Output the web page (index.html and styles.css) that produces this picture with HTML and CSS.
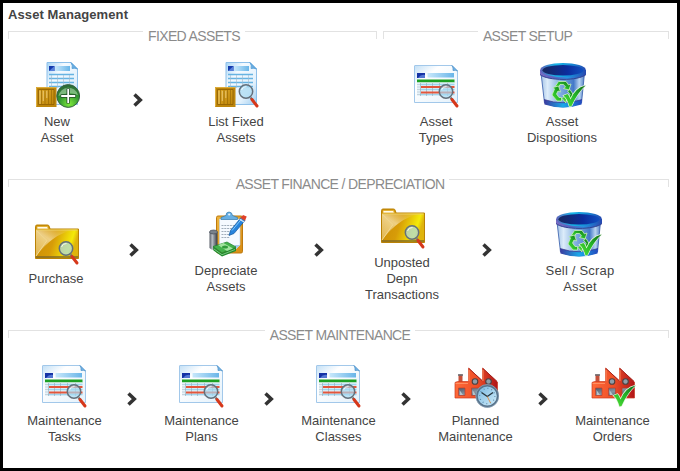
FILE: index.html
```html
<!DOCTYPE html>
<html lang="en">
<head>
<meta charset="utf-8">
<title>Asset Management</title>
<link rel="stylesheet" href="styles.css">
</head>
<body>
<svg class="sprite" aria-hidden="true">
  <defs>
    <linearGradient id="paper" x1="0" y1="0" x2="1" y2="1"><stop offset="0" stop-color="#a6d4f5"/><stop offset=".3" stop-color="#f4faff"/><stop offset=".7" stop-color="#e3f1fc"/><stop offset="1" stop-color="#9dcdf0"/></linearGradient>
    <linearGradient id="sheet" x1="0" y1="0" x2="1" y2="1"><stop offset="0" stop-color="#c3e0f6"/><stop offset=".3" stop-color="#fff"/><stop offset="1" stop-color="#e3f1fb"/></linearGradient>
    <linearGradient id="sky"><stop offset="0" stop-color="#c8e8fb"/><stop offset="1" stop-color="#69b5e8"/></linearGradient>
    <linearGradient id="crate" x1="0" y1="0" x2="1" y2="1"><stop offset="0" stop-color="#dfa92a"/><stop offset="1" stop-color="#bd8508"/></linearGradient>
    <linearGradient id="folder" x1="0" y1="0" x2="1" y2=".25"><stop offset="0" stop-color="#ca8a04"/><stop offset=".5" stop-color="#d79c08"/><stop offset=".74" stop-color="#e9cb08"/><stop offset=".9" stop-color="#f4ea08"/><stop offset="1" stop-color="#dfb40c"/></linearGradient>
    <linearGradient id="shine" x1="0" y1="1" x2="1" y2="0"><stop offset="0" stop-color="#f3dca0" stop-opacity=".25"/><stop offset=".5" stop-color="#fff5d8" stop-opacity=".6"/><stop offset="1" stop-color="#e5b43a" stop-opacity=".1"/></linearGradient>
    <radialGradient id="orb" cx=".55" cy=".85" r=".8"><stop offset="0" stop-color="#7eea3b"/><stop offset=".55" stop-color="#349b30"/><stop offset="1" stop-color="#2c6c38"/></radialGradient>
    <linearGradient id="rim"><stop offset="0" stop-color="#5f62b8"/><stop offset=".35" stop-color="#16b5e8"/><stop offset=".7" stop-color="#1787d3"/><stop offset="1" stop-color="#2648b0"/></linearGradient>
    <linearGradient id="band"><stop offset="0" stop-color="#7a6cc4"/><stop offset=".3" stop-color="#5a62c0"/><stop offset=".6" stop-color="#2a8fe0"/><stop offset="1" stop-color="#2648b0"/></linearGradient>
    <linearGradient id="hollow"><stop offset="0" stop-color="#17285f"/><stop offset=".6" stop-color="#0c2c9c"/><stop offset="1" stop-color="#104fc0"/></linearGradient>
    <linearGradient id="bucket"><stop offset="0" stop-color="#a5c3e5"/><stop offset=".15" stop-color="#dcecfa"/><stop offset=".45" stop-color="#7fabdf"/><stop offset=".75" stop-color="#4479c8"/><stop offset=".88" stop-color="#b9d4f1"/><stop offset="1" stop-color="#5280c5"/></linearGradient>
    <linearGradient id="base"><stop offset="0" stop-color="#3c399d"/><stop offset=".5" stop-color="#19a9e9"/><stop offset="1" stop-color="#2448bd"/></linearGradient>
    <linearGradient id="leaf" x1="1" y1="0" x2="0" y2="1"><stop offset="0" stop-color="#11691b"/><stop offset=".5" stop-color="#25b829"/><stop offset="1" stop-color="#53df35"/></linearGradient>
    <linearGradient id="brick"><stop offset="0" stop-color="#ff6a38"/><stop offset=".5" stop-color="#ee5028"/><stop offset="1" stop-color="#b01418"/></linearGradient>
    <linearGradient id="pane" x1="0" y1="0" x2="1" y2="1"><stop offset="0" stop-color="#4d5868"/><stop offset=".5" stop-color="#8794a2"/><stop offset="1" stop-color="#48505c"/></linearGradient>
    <linearGradient id="face" x1="0" y1="0" x2="1" y2="1"><stop offset="0" stop-color="#75b6df"/><stop offset="1" stop-color="#d5effb"/></linearGradient>
    <linearGradient id="can"><stop offset="0" stop-color="#555c66"/><stop offset=".35" stop-color="#b8bec5"/><stop offset="1" stop-color="#2f353e"/></linearGradient>
    <linearGradient id="board" x1="0" y1="0" x2="1" y2="1"><stop offset="0" stop-color="#eeb43c"/><stop offset="1" stop-color="#d98c12"/></linearGradient>
  </defs>

  <symbol id="lens" viewBox="0 0 48 52">
    <path d="M38.500 36.500 40.500 39" stroke="#777" stroke-width="2.200"/>
    <path d="M40 38.500 45 45" stroke="#d6381b" stroke-width="3" stroke-linecap="round"/>
    <circle cx="34" cy="30.500" r="6.700" fill="#a8daf2" fill-opacity=".68" stroke="#64707b" stroke-width="1.500"/>
    <path d="M29.500 29a5 5 0 0 1 5-3.500" fill="none" stroke="#fff" stroke-opacity=".8"/>
  </symbol>

  <symbol id="tick" viewBox="0 0 48 52">
    <path d="M25.500 34.500 29.500 33Q31.500 35 32.500 38.500 37 27 47.500 24.500 39.500 31.500 33.500 45L31.500 45.500Q29.500 38 25.500 34.500Z" fill="url(#leaf)" stroke="#e6f6df" stroke-width="1.300" paint-order="stroke"/>
  </symbol>

  <symbol id="ledger" viewBox="0 0 48 52">
    <path d="M14 1.500H38L44.500 8V43.500H14Z" fill="url(#paper)" stroke="#8dbfe9"/>
    <path d="M38 1.500Q40 5 39 7.500 42 6.800 44.500 8Z" fill="#68aee2" stroke="#4b96d2" stroke-width=".7"/>
    <path d="M22 5H37V10H22Z" fill="url(#sky)"/>
    <path d="M16 5H21.500V10H16Z" fill="#1439ad"/><path d="M16 10 21.500 5V10Z" fill="#5680da"/>
    <path d="M16 13.500H41M16 17.500H41M16 21.500H41M16 25.500H41" stroke="#65b3e2" stroke-width="1.600"/>
    <path d="M18.500 14V27M24.500 14V27M30.500 14V27M36.500 14V27" stroke="#a2bacd" stroke-width=".6"/>
    <path d="M3 26H23.500V46H3Z" fill="#bd860c"/>
    <path d="M5.500 28.500H21V43.500H5.500Z" fill="url(#crate)" stroke="#8e5e00" stroke-width=".8"/>
    <path d="M3.500 45.500V26.500H23" fill="none" stroke="#e4b74b" stroke-width=".8"/>
    <path d="M8.500 29V43M12 29V43M15.500 29V43M18.500 29V43" stroke="#9a6a04" stroke-width=".7"/>
    <path d="M7 43V30M10.300 40V30M13.800 37V30" stroke="#efd083" stroke-width=".8"/>
  </symbol>

  <symbol id="new-asset" viewBox="0 0 48 52">
    <use href="#ledger"/>
    <circle cx="35.200" cy="35" r="11.400" fill="url(#orb)" stroke="#376342" stroke-width="1"/>
    <path d="M25.500 35a10 10 0 0 1 19.500-1Q35 30 25.500 35Z" fill="#d6f2d6" opacity=".45"/>
    <path d="M35.200 27.500V42.500M27.700 35H42.700" stroke="#244a2a" stroke-width="3.400"/>
    <path d="M35.200 28V42M28.200 35H42.200" stroke="#fff" stroke-width="1.800"/>
  </symbol>

  <symbol id="list-asset" viewBox="0 0 48 52"><use href="#ledger"/><use href="#lens"/></symbol>

  <symbol id="table" viewBox="0 0 48 52">
    <path d="M2.500 5Q2.500 4.500 3 4.500H40L45.500 10V41.500H2.500Z" fill="url(#sheet)" stroke="#a2c8ea"/>
    <path d="M40 4.500Q41.500 7 41 9.500 44 9 45.500 10Z" fill="#72b3e5" stroke="#4c90c8" stroke-width=".7"/>
    <path d="M15.500 12H42V16.500H15.500Z" fill="url(#sky)"/>
    <path d="M5 12H13V17H5Z" fill="#1532a5"/><path d="M6 17Q9 13 13 14V17Z" fill="#5377d2"/>
    <path d="M5 18.500H42.500V21.500H5Z" fill="#1ca024"/>
    <path d="M5 21.500H42.500V35H5Z" fill="#e5f2fa"/>
    <path d="M8 23.500H42.500M8 28.500H42.500M8 33.500H42.500" stroke="#9fd5ee" stroke-width="1.700"/>
    <path d="M8.500 22V35M14.500 22V35M20.500 22V35M27.500 22V35M35.500 22V35" stroke="#9ab1bf" stroke-width=".7"/>
    <path d="M9 26H42.500M9 31.500H42.500" stroke="#e3563c" stroke-width="2"/>
    <path d="M5 23.500H8M5 26H8M5 28.500H8M5 31H8M5 33.500H8" stroke="#b9c7ce" stroke-width=".7"/>
    <use href="#lens"/>
  </symbol>

  <symbol id="bin" viewBox="0 0 48 52">
    <path d="M2 12H45.500L42.500 42Q24 50 5.500 42Z" fill="url(#bucket)" stroke="#3159aa" stroke-width=".8"/>
    <path d="M5 38.500Q24 45 43 38.500L42.500 43.500Q24 49.500 5.500 43.500Z" fill="url(#base)"/>
    <path d="M5 38.500Q24 45 43 38.500" fill="none" stroke="#302d8b" stroke-width=".7"/>
    <path d="M1 9V13.500C8 20 40 20 47 13.500V9Z" fill="url(#band)"/>
    <path d="M1 13.500C8 20 40 20 47 13.500" fill="none" stroke="#354191"/>
    <ellipse cx="24" cy="9" rx="22.800" ry="7" fill="url(#rim)"/>
    <ellipse cx="24" cy="9.300" rx="20.500" ry="5.200" fill="url(#hollow)"/>
    <g fill="url(#leaf)" stroke="#c7f2b6" stroke-width=".8">
      <path d="M16.500 25 19.500 20.500H27L29.500 24 32 23 30 29 24.500 27.500 26.500 26 24.500 23.500H21L19.500 26.500Z"/>
      <path d="M14 26.500 19.500 25 21.500 31 19 30 17.500 33 20 36.500H22.500V40H18L13 34 15.500 28Z"/>
      <path d="M31 28.500 34.500 34 30 39.500H27V42L23 37.500 27 33.500V36L29 36 31 33.500 28.500 30Z"/>
    </g>
    <use href="#tick" x="-1"/>
  </symbol>

  <symbol id="folder-icon" viewBox="0 0 48 52">
    <path d="M3.500 12V8.500Q3.500 7 5 7H15.500Q17 7 17.300 8.500L18 11H46.500V40.500H3.500Z" fill="url(#folder)" stroke="#ba8205"/>
    <path d="M5 8.500H15.500L16.300 11H5Z" fill="#fffbe9" stroke="#e2ac28" stroke-width=".8"/>
    <path d="M4 12H41Q21 16 4 38Z" fill="url(#shine)"/>
    <path d="M4 12 15 22.500 4 38" fill="#f3d991" fill-opacity=".35" stroke="#f1d891" stroke-width="1"/>
    <path d="M4 12H45.500" stroke="#eed268"/>
    <path d="M4 39H46" stroke="#826a24" stroke-width="1.500"/>
    <use href="#lens"/>
  </symbol>

  <symbol id="clipboard" viewBox="0 0 48 52">
    <rect x="14.500" y="6" width="26" height="37" rx="1.500" fill="url(#board)" stroke="#bd7a10"/>
    <path d="M17.500 9H38V35L32.500 40.500H17.500Z" fill="#f5faff" stroke="#bcd2e6" stroke-width=".6"/>
    <path d="M38 35H32.500V40.500Z" fill="#a6cbe9"/>
    <path d="M19.500 15.500H35M19.500 18.500H35M19.500 21.500H31M19.500 24.500H29M19.500 27.500H28" stroke="#8c9baa" stroke-width=".8" stroke-dasharray="2 .8"/>
    <path d="M19 9.500V7.500L24 5.500Q24 2 27 2T30.500 5.500L35.500 7.500V9.500Z" fill="#67afe4" stroke="#367cae" stroke-width=".7"/>
    <circle cx="27.200" cy="4.500" r="1.100" fill="#e9f5fd"/>
    <path d="M27 25.500 28.500 20.500 39 7.500 43 10.500 32 23.500Z" fill="#2583dc" stroke="#14599e" stroke-width=".7"/>
    <path d="M30 20.500 40 8.500" stroke="#7ec7fa"/>
    <path d="M38.500 8 41 5 44.700 6.500 43 10.800Z" fill="#e04128"/>
    <path d="M37.700 9.200 42 12" stroke="#dce5ee" stroke-width="1.200"/>
    <path d="M7.500 22V38Q11.500 42 15.500 38V22Z" fill="url(#can)"/>
    <ellipse cx="11.500" cy="22" rx="4" ry="2" fill="#78818b" stroke="#454c56" stroke-width=".7"/>
    <path d="M11 36.500 25 32 34 37 20 43Z" fill="#43b24b" stroke="#237c2e" stroke-width=".7"/>
    <path d="M11 36.500 20 43V46.500L11.500 40.500ZM20 43 34 37V41L20 46.500Z" fill="#218a2f"/>
    <path d="M16 35 21.500 33.100 31 38.500 25 41Z" fill="#a0e49e"/><ellipse cx="23" cy="37" rx="3" ry="1.600" fill="#319b3b"/>
    <path d="M12 39 20 44.700 33 39.500" fill="none" stroke="#b5edb1" stroke-width=".6"/>
  </symbol>

  <symbol id="factory" viewBox="0 0 48 52">
    <path d="M7.500 13.500H11.500V22H7.500Z" fill="#c5503a"/><path d="M7 14H12" stroke="#646b73" stroke-width="1.500"/>
    <path d="M4 21.500 6.500 20.500H17.500V7L31.500 20V7L46.500 21V37H4Z" fill="url(#brick)" stroke="#c93a20" stroke-width=".7"/>
    <path d="M18 7.500 31 19.500M32 7.500 46 20.500" stroke="#9c1c1a" stroke-width=".9"/>
    <path d="M4.500 22.500H17M18 9V20M32 9V20" stroke="#ff9b70" stroke-width=".8"/>
    <circle cx="24" cy="20.500" r="2.800" fill="#8f9ea9" stroke="#4c4042" stroke-width="1.100"/>
    <circle cx="37.500" cy="20.500" r="2.800" fill="#8f9ea9" stroke="#4c4042" stroke-width="1.100"/>
    <path d="M7.500 27H14V34.500H7.500ZM20.500 27H27.500V34.500H20.500ZM34 27H41V34.500H34Z" fill="url(#pane)" stroke="#bb3d2d" stroke-width=".7"/>
    <path d="M8.500 29 12 34H9ZM21.500 29 25 34H22Z" fill="#b7c4ca"/>
  </symbol>

  <symbol id="planned" viewBox="0 0 48 52">
    <use href="#factory"/>
    <circle cx="36.300" cy="35" r="10.600" fill="url(#face)" stroke="#58738b" stroke-width="2.200"/>
    <circle cx="36.300" cy="35" r="11.500" fill="none" stroke="#acc1d2" stroke-width=".5"/>
    <circle cx="36.300" cy="35" r="7.600" fill="none" stroke="#4e7f9f" stroke-width="1.200" stroke-dasharray=".8 3.180"/>
    <path d="M30.500 31.500 36.300 35.500 42 31.500" fill="none" stroke="#26363f" stroke-width="1.400"/>
    <path d="M36.300 35.500 39.500 42" stroke="#e28b40" stroke-width=".9"/>
  </symbol>
  <symbol id="orders" viewBox="0 0 48 52"><use href="#factory"/><use href="#tick"/></symbol>

  <symbol id="chevron" viewBox="0 0 10 14"><path d="M1.500 1.500 7.300 7 1.500 12.500" fill="none" stroke="#333" stroke-width="3.500"/></symbol>
</svg>

<main class="window">
  <h1 class="title">Asset Management</h1>
  <div class="panels">
    <section class="panel assets">
      <h2 class="legend"><span>FIXED ASSETS</span></h2>
      <div class="flow">
        <a class="item"><svg class="icon"><use href="#new-asset"/></svg><span>New<br>Asset</span></a>
        <svg class="arrow"><use href="#chevron"/></svg>
        <a class="item"><svg class="icon"><use href="#list-asset"/></svg><span>List Fixed<br>Assets</span></a>
      </div>
    </section>
    <section class="panel setup">
      <h2 class="legend"><span>ASSET SETUP</span></h2>
      <div class="flow">
        <a class="item"><svg class="icon"><use href="#table"/></svg><span>Asset<br>Types</span></a>
        <a class="item"><svg class="icon nudge-right"><use href="#bin"/></svg><span>Asset<br>Dispositions</span></a>
      </div>
    </section>
  </div>
  <section class="panel finance">
    <h2 class="legend"><span>ASSET FINANCE / DEPRECIATION</span></h2>
    <div class="flow">
      <a class="item"><svg class="icon"><use href="#folder-icon"/></svg><span>Purchase</span></a>
      <svg class="arrow"><use href="#chevron"/></svg>
      <a class="item"><svg class="icon"><use href="#clipboard"/></svg><span>Depreciate<br>Assets</span></a>
      <svg class="arrow"><use href="#chevron"/></svg>
      <a class="item"><svg class="icon"><use href="#folder-icon"/></svg><span>Unposted<br>Depn<br>Transactions</span></a>
      <svg class="arrow"><use href="#chevron"/></svg>
      <a class="item"><svg class="icon nudge-left"><use href="#bin"/></svg><span class="spaced">Sell / Scrap<br>Asset</span></a>
    </div>
  </section>
  <section class="panel maintenance">
    <h2 class="legend"><span>ASSET MAINTENANCE</span></h2>
    <div class="flow">
      <a class="item"><svg class="icon"><use href="#table"/></svg><span>Maintenance<br>Tasks</span></a>
      <svg class="arrow"><use href="#chevron"/></svg>
      <a class="item"><svg class="icon"><use href="#table"/></svg><span>Maintenance<br>Plans</span></a>
      <svg class="arrow"><use href="#chevron"/></svg>
      <a class="item"><svg class="icon"><use href="#table"/></svg><span>Maintenance<br>Classes</span></a>
      <svg class="arrow"><use href="#chevron"/></svg>
      <a class="item"><svg class="icon"><use href="#planned"/></svg><span>Planned<br>Maintenance</span></a>
      <svg class="arrow"><use href="#chevron"/></svg>
      <a class="item"><svg class="icon"><use href="#orders"/></svg><span>Maintenance<br>Orders</span></a>
    </div>
  </section>
</main>
</body>
</html>
```
FILE: styles.css
```css
* { box-sizing: border-box; }

body {
  margin: 0;
  background: #fff;
  color: #444;
  font: 13px/16px "Liberation Sans", Arial, sans-serif;
}

.sprite { display: block; width: 0; height: 0; }

.window {
  height: 471px;
  padding: 4px 8px 0 5px;
  border: 3px solid #000;
}

.title {
  margin: 0;
  font-size: 13px;
  line-height: 16px;
  letter-spacing: .1px;
}

.panels {
  display: grid;
  grid-template-columns: 369px 286px;
  gap: 6px;
  height: 148px;
  margin-top: 8px;
}

.panel { width: 661px; }
.assets, .setup { width: auto; }
.finance { height: 151px; }

.legend {
  display: flex;
  gap: 5px;
  height: 8px;
  margin: 0;
  color: #8b8b8b;
  font-size: 14px;
  font-weight: 400;
  line-height: 11px;
  letter-spacing: -.64px;
  white-space: nowrap;
}

.legend::before,
.legend::after {
  content: "";
  border-top: 1px solid #e2e2e2;
}

.legend::before { flex: 1 1 3px; border-left: 1px solid #e2e2e2; }
.legend::after { flex: 1 1 0; border-right: 1px solid #e2e2e2; }

.flow {
  display: grid;
  align-items: center;
  justify-items: center;
  padding-top: 22px;
}

.assets .flow { grid-template-columns: 98px 64px 132px; }
.setup .flow { grid-template-columns: 106px 146px; }
.finance .flow { grid-template-columns: 96px 60px 124px 62px 104px 66px 120px; padding-top: 15px; }
.maintenance .flow { grid-template-columns: 113px repeat(4, 24px 113px); padding-top: 23px; }

.item {
  display: flex;
  flex-direction: column;
  gap: 1px;
  align-items: center;
  text-align: center;
}

.maintenance .item { gap: 0; }
.spaced { letter-spacing: .2px; }

.icon { width: 48px; height: 52px; }
.nudge-right { margin-left: 2px; }
.nudge-left { margin-right: 2px; }

.arrow {
  width: 10px;
  height: 14px;
  margin-bottom: 8px;
}

.finance .arrow { margin-bottom: 5px; }
.maintenance .arrow { margin-right: 2px; }
```
